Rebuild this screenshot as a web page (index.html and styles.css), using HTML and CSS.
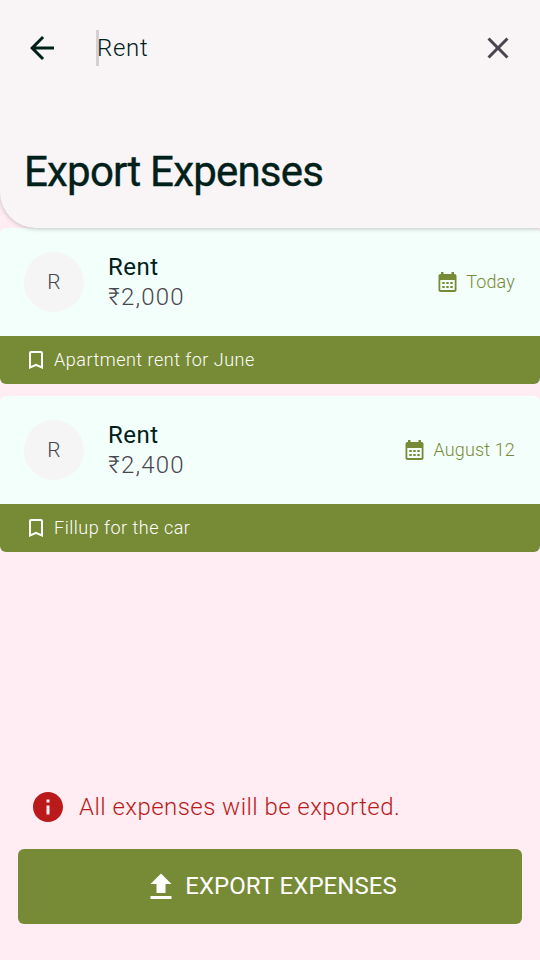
FILE: index.html
```html
<!DOCTYPE html>
<html lang="en">
<head>
<meta charset="utf-8">
<title>Export Expenses</title>
<link rel="stylesheet" href="styles.css">
</head>
<body>
<svg class="defs" aria-hidden="true">
  <symbol id="calendar" viewBox="0 0 24 24"><path fill-rule="evenodd" d="M19.500 4h-.5V2h-2.500v2H8.500V2H6v2h-.5c-1.100 0-2 .9-2 2v14c0 1.100.9 2 2 2h14c1.100 0 2-.9 2-2V6c0-1.100-.9-2-2-2zm.2 16H5.300V10h14.400v10zM7.300 12h2.400v2H7.300zm4 0h2.400v2h-2.400zm4 0h2.400v2h-2.400zM7.300 16h2.400v2H7.300zm4 0h2.400v2h-2.400zm4 0h2.400v2h-2.400z"/></symbol>
  <symbol id="bookmark" viewBox="0 0 24 24"><path d="M17 3H7c-1.100 0-2 .9-2 2v16l7-3 7 3V5c0-1.100-.9-2-2-2zm0 15-5-2.180L7 18V5h10v13z"/></symbol>
</svg>
<main class="screen">
  <header class="header">
    <div class="search">
      <svg class="icon" viewBox="0 0 24 24"><path d="M20 11H7.830l5.590-5.590L12 4l-8 8 8 8 1.410-1.410L7.830 13H20v-2z"/></svg>
      <span class="caret"></span>
      <span class="query">Rent</span>
      <svg class="icon close" viewBox="0 0 24 24"><path d="M19 6.410 17.590 5 12 10.590 6.410 5 5 6.410 10.590 12 5 17.590 6.410 19 12 13.410 17.590 19 19 17.590 13.410 12z"/></svg>
    </div>
    <h1 class="title">Export Expenses</h1>
  </header>
  <section class="list">
    <article class="card">
      <div class="row">
        <span class="avatar">R</span>
        <div class="info"><div class="name">Rent</div><div class="amount">₹2,000</div></div>
        <svg class="small" viewBox="0 0 24 24"><use href="#calendar"/></svg>
        <span class="date">Today</span>
      </div>
      <div class="note"><svg class="small" viewBox="0 0 24 24"><use href="#bookmark"/></svg><span>Apartment rent for June</span></div>
    </article>
    <article class="card">
      <div class="row">
        <span class="avatar">R</span>
        <div class="info"><div class="name">Rent</div><div class="amount">₹2,400</div></div>
        <svg class="small" viewBox="0 0 24 24"><use href="#calendar"/></svg>
        <span class="date">August 12</span>
      </div>
      <div class="note"><svg class="small" viewBox="0 0 24 24"><use href="#bookmark"/></svg><span>Fillup for the car</span></div>
    </article>
  </section>
  <footer class="footer">
    <div class="warning">
      <svg class="icon" viewBox="0 0 24 24"><path d="M12 2C6.480 2 2 6.480 2 12s4.480 10 10 10 10-4.480 10-10S17.520 2 12 2zm1 15h-2v-6h2v6zm0-8h-2V7h2v2z"/></svg>
      <span>All expenses will be exported.</span>
    </div>
    <button class="export">
      <svg class="icon" viewBox="0 0 24 24"><path d="M5 20h14v-2H5v2zm4-4h6v-6h4l-7-7-7 7h4v6z"/></svg>
      <span>EXPORT EXPENSES</span>
    </button>
  </footer>
</main>
</body>
</html>
```
FILE: styles.css
```css
* { box-sizing: border-box; }
body { margin: 0; font-family: Roboto, "Noto Sans", sans-serif; color: #00201a; }
svg { flex: none; fill: currentColor; }
.defs { display: none; }
.screen { height: 960px; display: flex; flex-direction: column; background: #ffedf3; overflow: hidden; }
span, h1, .name, .amount { white-space: nowrap; }
.header { position: relative; z-index: 1; height: 228px; flex: none; background: #f9f5f6; border-bottom-left-radius: 36px; box-shadow: 0 1px 4px rgba(0, 0, 0, .22); }
.search { height: 96px; padding: 0 24px; display: flex; align-items: center; }
.icon { width: 36px; height: 36px; }
.caret { width: 3px; height: 36px; margin-left: 36px; background: #d4d0d4; }
.query { margin-left: -2px; flex: 1; font-size: 24px; font-weight: 300; letter-spacing: .7px; }
.close { color: #49454f; }
.title { margin: 48px 0 0 24px; font-size: 42px; line-height: 56px; font-weight: 450; letter-spacing: -.8px; -webkit-text-stroke: .4px #00201a; }
.list { display: grid; gap: 12px; }
.card { height: 156px; border-radius: 6px; overflow: hidden; background: #f3fffb; }
.row { height: 108px; padding: 0 24px; display: flex; align-items: center; }
.avatar { width: 60px; height: 60px; border-radius: 50%; background: #f5f5f5; display: grid; place-items: center; font-size: 21px; font-weight: 300; color: #49454f; }
.info { flex: 1; margin: 0 0 1px 24px; font-size: 24px; line-height: 30px; }
.name { font-weight: 450; letter-spacing: .5px; }
.amount { font-weight: 300; letter-spacing: 1.2px; color: #49454f; }
.row .small, .date { color: #778b36; }
.small { width: 24px; height: 24px; }
.date { margin: 0 1px 1px 7px; font-size: 18px; font-weight: 300; letter-spacing: .15px; }
.note { height: 48px; padding-left: 24px; display: flex; align-items: center; gap: 6px; background: #778b36; color: #fff; font-size: 18px; font-weight: 300; letter-spacing: .5px; }
.note span { margin-bottom: 2px; }
.footer { margin-top: auto; padding: 0 18px 36px; }
.warning { display: flex; align-items: center; gap: 13px; margin: 0 0 24px 12px; color: #ba1a1a; font-size: 24px; font-weight: 300; letter-spacing: .45px; }
.export { width: 100%; height: 75px; padding: 0; border: 0; border-radius: 6px; display: flex; align-items: center; justify-content: center; gap: 6px; background: #778b36; color: #fff; font: 450 24px Roboto, sans-serif; letter-spacing: .05px; }
.export span { margin-bottom: 2px; }
```
